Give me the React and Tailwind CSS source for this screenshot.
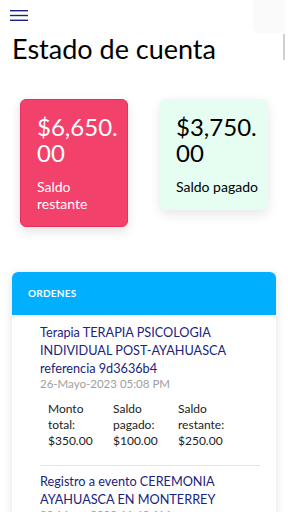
import React from 'react';

const orders = [
  {
    id: '9d3636b4',
    title: 'Terapia TERAPIA PSICOLOGIA INDIVIDUAL POST-AYAHUASCA referencia 9d3636b4',
    date: '26-Mayo-2023 05:08 PM',
    total: '$350.00',
    paid: '$100.00',
    rest: '$250.00',
  },
  {
    id: 'cer-mty',
    title: 'Registro a evento CEREMONIA AYAHUASCA EN MONTERREY',
    date: '20-Mayo-2023 11:40 AM',
    total: '$3,500.00',
    paid: '$500.00',
    rest: '$3,000.00',
  },
];

function Menu() {
  return (
    <svg width="18" height="12" viewBox="0 0 18 12" className="block">
      <rect x="0" y="0" width="18" height="1.4" fill="#1a237e" />
      <rect x="0" y="4.8" width="18" height="1.4" fill="#1a237e" />
      <rect x="0" y="9.6" width="18" height="1.4" fill="#1a237e" />
    </svg>
  );
}

export default function App() {
  return (
    <div className="w-[288px] h-[512px] overflow-hidden bg-white font-['Lato','Open_Sans',sans-serif] text-[#111]">
      <div className="h-[33px] flex items-start justify-between">
        <div className="pl-[10px] pt-[10px]">
          <Menu />
        </div>
        <div className="w-[32px] h-[33px] mr-[3px] bg-[#fafafa] rounded-bl-md" />
      </div>

      <div className="flex items-start justify-between pl-3 pr-[3px]">
        <h1 className="text-[27px] leading-[32px] font-normal text-black">Estado de cuenta</h1>
        <div className="w-[2px] h-[26px] bg-[#d0d0d0] mt-[1px]" />
      </div>

      <div className="grid grid-cols-2 gap-8 px-5 mt-[34px] items-start">
        <div className="bg-[#f2416b] border border-[#e8305c] rounded-md shadow-[0_4px_12px_rgba(0,0,0,0.12)] pl-4 pr-2 pt-[14px] pb-[14px] text-white">
          <div className="text-[24px] leading-[26px]">$6,650.<wbr />00</div>
          <div className="text-[14px] leading-[17px] mt-3 pr-4">Saldo restante</div>
        </div>
        <div className="bg-[#e6fdf2] rounded-md shadow-[0_4px_12px_rgba(0,0,0,0.10)] pl-4 pr-2 pt-[15px] pb-[15px] text-black">
          <div className="text-[24px] leading-[26px]">$3,750.<wbr />00</div>
          <div className="text-[14px] leading-[17px] mt-3 whitespace-nowrap">Saldo pagado</div>
        </div>
      </div>

      <div className="mx-3 mt-[45px] rounded-md bg-white shadow-[0_2px_10px_rgba(0,0,0,0.12)] overflow-hidden">
        <div className="h-[43px] bg-[#00b0ff] flex items-center px-4">
          <span className="text-[10px] font-bold text-white tracking-wide">ORDENES</span>
        </div>
        <div className="pl-7 pr-4">
          {orders.map((o, i) => (
            <div
              key={o.id}
              className={(i === 0 ? 'pt-2' : 'pt-[6px]') + ' pb-4 border-b border-[#e4e4e4]'}
            >
              <div className="text-[12.7px] leading-[18px] text-[#1a237e]">{o.title}</div>
              <div className="text-[11.5px] leading-[14px] text-[#a0a0a0]">{o.date}</div>
              <div className="grid grid-cols-[65px_65px_65px] ml-2 mt-[10px] text-[12px] leading-[16px] text-[#222]">
                <div>Monto total:<br />{o.total}</div>
                <div>Saldo pagado:<br />{o.paid}</div>
                <div>Saldo restante:<br />{o.rest}</div>
              </div>
            </div>
          ))}
        </div>
      </div>
    </div>
  );
}
